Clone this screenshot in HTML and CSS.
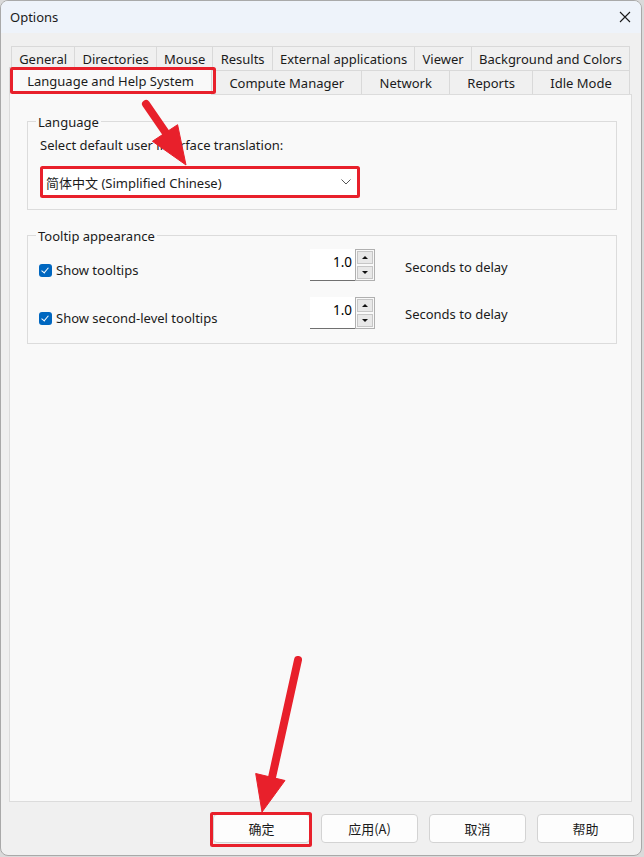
FILE: index.html
```html
<!DOCTYPE html>
<html lang="en">
  <head>
    <meta charset="UTF-8" />
    <meta name="viewport" content="width=device-width, initial-scale=1.0" />
    <title>Options</title>
    <link rel="stylesheet" href="styles.css">
  </head>
  <body>
    <div class="window">
      <div class="titlebar">
        <span class="title">Options</span>
        <svg class="close" width="12" height="12" viewBox="0 0 12 12">
          <path d="M1 1 L11 11 M11 1 L1 11" stroke="#1a1a1a" stroke-width="1.1" fill="none" />
        </svg>
      </div>

      <div class="content">
        <div class="tabs">
          <div class="tab-row">
            <div class="tab">General</div>
            <div class="tab">Directories</div>
            <div class="tab">Mouse</div>
            <div class="tab">Results</div>
            <div class="tab">External applications</div>
            <div class="tab">Viewer</div>
            <div class="tab">Background and Colors</div>
          </div>
          <div class="tab-row">
            <div class="tab selected">Language and Help System</div>
            <div class="tab">Compute Manager</div>
            <div class="tab">Network</div>
            <div class="tab">Reports</div>
            <div class="tab">Idle Mode</div>
          </div>
        </div>

        <div class="panel">
          <div class="group group-language">
            <div class="group-title">Language</div>
            <div class="hint">Select default user interface translation:</div>
            <div class="combo">
              <span>简体中文 (Simplified Chinese)</span>
              <svg width="10" height="6" viewBox="0 0 10 6">
                <path d="M0.5 0.5 L5 5 L9.5 0.5" stroke="#555" stroke-width="1" fill="none" />
              </svg>
            </div>
          </div>

          <div class="group group-tooltip">
            <div class="group-title">Tooltip appearance</div>
            <div class="tip-grid">
              <label class="check"><span class="box"></span>Show tooltips</label>
              <div class="spin">
                <div class="spin-value">1.0</div>
                <div class="spin-buttons">
                  <span class="spin-btn"><i class="up"></i></span>
                  <span class="spin-btn"><i class="down"></i></span>
                </div>
              </div>
              <div class="delay">Seconds to delay</div>

              <label class="check"><span class="box"></span>Show second-level tooltips</label>
              <div class="spin">
                <div class="spin-value">1.0</div>
                <div class="spin-buttons">
                  <span class="spin-btn"><i class="up"></i></span>
                  <span class="spin-btn"><i class="down"></i></span>
                </div>
              </div>
              <div class="delay delay-second">Seconds to delay</div>
            </div>
          </div>
        </div>
      </div>

      <div class="buttons">
        <button type="button">确定</button>
        <button type="button">应用(A)</button>
        <button type="button">取消</button>
        <button type="button">帮助</button>
      </div>
    </div>

    <!-- red annotation marks drawn over the dialog -->
    <svg class="marks" width="644" height="857" viewBox="0 0 644 857">
      <g fill="none" stroke="#e8202b" stroke-width="3">
        <rect x="11.5" y="68.5" width="203" height="24" rx="1" />
        <rect x="41.5" y="167.5" width="317" height="29" rx="1" />
        <rect x="211.5" y="813.5" width="99" height="32" rx="1" />
      </g>
      <g fill="#e8202b" stroke="#e8202b">
        <line x1="146" y1="104" x2="168" y2="136" stroke-width="8" stroke-linecap="round" />
        <polygon points="186,165 177.6,124.7 152.4,141.3" stroke-width="1" />
        <line x1="298" y1="660" x2="271" y2="782" stroke-width="8" stroke-linecap="round" />
        <polygon points="262,812 285,780.5 255.7,773.5" stroke-width="1" />
      </g>
    </svg>
  </body>
</html>
```

FILE: styles.css
```css
body {
  margin: 0;
  background-color: #dadada;
  font-family: "Noto Sans", "Noto Sans CJK SC", sans-serif;
  font-size: 13px;
  color: #1b1b1b;
}
.window {
  box-sizing: border-box;
  width: 642px;
  height: 856px;
  background-color: #f0f0f0;
  border: 1px solid #a9a9a9;
  border-radius: 8px;
  overflow: hidden;
  display: flex;
  flex-direction: column;
}
.titlebar {
  height: 32px;
  background-color: #eef3fa;
  display: flex;
  align-items: center;
  justify-content: space-between;
  padding: 0 8px 0 9px;
}
.close {
  margin-right: 2px;
}
.content {
  flex: 1;
  display: flex;
  flex-direction: column;
  padding: 13px 9px 0 8px;
}
.tabs {
  margin: 0 2px;
}
.tab-row {
  display: flex;
}
.tab {
  flex: 1 1 auto;
  height: 24px;
  box-sizing: border-box;
  padding: 0 6px;
  border: 1px solid #d9d9d9;
  border-bottom: none;
  margin-left: -1px;
  display: flex;
  align-items: center;
  justify-content: center;
  white-space: nowrap;
  background-color: #f0f0f0;
}
.tab:first-child {
  margin-left: 0;
}
.tab.selected {
  position: relative;
  z-index: 1;
  height: 28px;
  margin: -3px -2px -1px -2px;
  padding-bottom: 1px;
  background-color: #f9f9f9;
}
.tab.selected + .tab {
  margin-left: 1px;
}
.panel {
  flex: 1;
  background-color: #f9f9f9;
  border: 1px solid #dcdcdc;
  padding: 26px 14px 0 17px;
}
.group {
  border: 1px solid #dcdcdc;
  padding: 0 12px;
}
.group-title {
  width: fit-content;
  margin: -9px 0 0 -4px;
  padding: 0 2px;
  line-height: 18px;
  background-color: #f9f9f9;
}
.group-language {
  padding-bottom: 12px;
}
.hint {
  margin-top: 5px;
  line-height: 18px;
}
.combo {
  margin: 13px 0 0 1px;
  width: 318px;
  height: 30px;
  box-sizing: border-box;
  background-color: #fff;
  border: 1px solid #e2e2e2;
  border-bottom-color: #8a8a8a;
  border-radius: 3px;
  display: flex;
  align-items: center;
  justify-content: space-between;
  padding: 0 7px 0 4px;
}
.group-tooltip {
  margin-top: 25px;
  padding-bottom: 14px;
}
.tip-grid {
  display: grid;
  grid-template-columns: 241px 65px auto;
  column-gap: 30px;
  row-gap: 16px;
  margin: 4px 0 0 -1px;
  align-items: start;
}
.check {
  display: flex;
  align-items: center;
  gap: 4px;
  margin-top: 12px;
  line-height: 18px;
}
.box {
  width: 13px;
  height: 13px;
  box-sizing: border-box;
  border-radius: 3px;
  background-color: #0067c0;
  position: relative;
}
.box::after {
  content: "";
  position: absolute;
  left: 4px;
  top: 2px;
  width: 3px;
  height: 6px;
  border: solid #fff;
  border-width: 0 1px 1px 0;
  transform: rotate(40deg);
}
.spin {
  display: flex;
  height: 32px;
}
.spin-value {
  width: 45px;
  box-sizing: border-box;
  background-color: #fff;
  border-bottom: 1px solid #707070;
  text-align: right;
  padding: 4px 3px 0 0;
  line-height: 18px;
  font-size: 13.5px;
  color: #000;
}
.spin-buttons {
  width: 20px;
  box-sizing: border-box;
  border: 1px solid #b0b0b0;
  padding: 1px;
  display: flex;
  flex-direction: column;
  justify-content: space-between;
}
.spin-btn {
  height: 13px;
  box-sizing: border-box;
  border: 1px solid #c6c6c6;
  background-color: #e8e8e8;
  display: flex;
  align-items: center;
  justify-content: center;
}
.spin-btn i {
  width: 0;
  height: 0;
  border-left: 3px solid transparent;
  border-right: 3px solid transparent;
}
.spin-btn .up {
  border-bottom: 3px solid #111;
}
.spin-btn .down {
  border-top: 3px solid #111;
}
.delay {
  margin-top: 9px;
  line-height: 18px;
}
.delay-second {
  margin-top: 8px;
}
.buttons {
  height: 53px;
  box-sizing: border-box;
  display: flex;
  justify-content: flex-end;
  gap: 11px;
  padding: 12px 7px 0 0;
}
button {
  width: 97px;
  height: 29px;
  background-color: #fdfdfd;
  border: 1px solid #d3d3d3;
  border-radius: 4px;
  font-family: "Noto Sans CJK SC", "Noto Sans", sans-serif;
  font-size: 13px;
  color: #1b1b1b;
}
.marks {
  position: absolute;
  top: 0;
  left: 0;
  z-index: 2;
  pointer-events: none;
}
```
